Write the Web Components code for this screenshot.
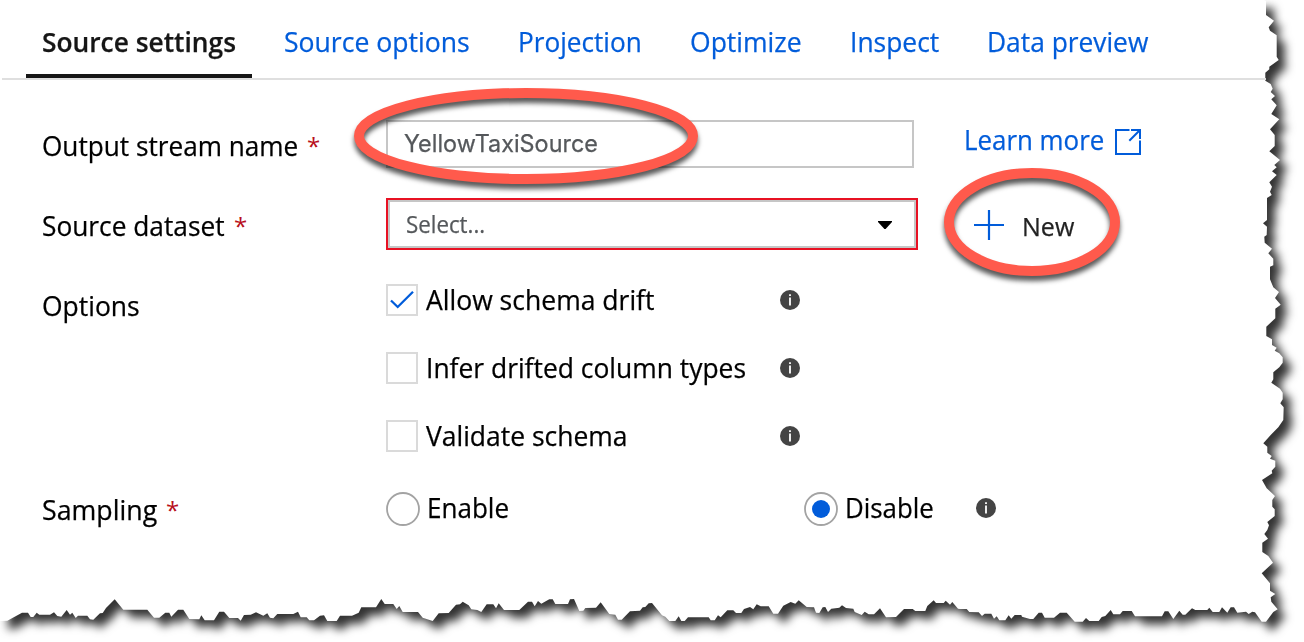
<!DOCTYPE html>
<html lang="en">
<head>
<meta charset="utf-8">
<title>Source settings</title>
<style>
body{margin:0;background:#fff;overflow:hidden;font-family:"Open Sans","Noto Sans",sans-serif;font-size:27px;line-height:36px;color:#000}
</style>
</head>
<body>
<source-settings></source-settings>
<script>
const define = (name, html, setup) => customElements.define(name, class extends HTMLElement {
  connectedCallback() {
    if (this.shadowRoot) return;
    this.attachShadow({mode: 'open'}).innerHTML = html;
    if (setup) setup(this, this.shadowRoot);
  }
});

/* Text set to a fixed advance width by horizontal condensing. */
define('fit-text', `<style>
:host{display:block;white-space:nowrap;flex:none;-webkit-text-stroke:.25px currentColor}
span{display:inline-block;transform-origin:0 50%}
</style><span><slot></slot></span>`, (el, root) => {
  const span = root.querySelector('span'), w = +el.getAttribute('w');
  el.style.width = w + 'px';
  span.style.transform = `scaleX(${w / span.offsetWidth})`;
});

define('tab-item', `<style>
:host{display:block;box-sizing:border-box;height:78px;padding:24px 16px 0;color:#015cda}
:host([active]){font-weight:600;color:#161616;border-bottom:4px solid #161616}
</style><slot></slot>`);

define('tab-bar', `<style>
:host{display:flex;gap:16px;box-sizing:border-box;height:80px;width:1264px;margin-left:2px;padding-left:24px;border-bottom:2px solid #dfdfdf}
</style><slot></slot>`);

define('form-row', `<style>
:host{display:grid;grid-template-columns:344px 1fr;align-items:start}
.label{display:flex;gap:10px;padding-top:var(--drop,0)}
.star{display:none;color:#b8101c;font-size:24px;margin-left:-1px}
:host([required]) .star{display:block}
.controls{display:flex}
</style><div class="label"><slot name="label"></slot><span class="star">*</span></div><div class="controls"><slot></slot></div>`);

define('text-field', `<style>
:host{display:block;box-sizing:border-box;width:528px;height:48px;border:2px solid #c6c6c6;padding:4px 16px;font-family:Inter,sans-serif;font-size:24px;color:#55585b}
</style><slot></slot>`);

define('select-field', `<style>
:host{display:flex;justify-content:space-between;align-items:center;box-sizing:border-box;width:532px;height:52px;border:2px solid #e81123;box-shadow:inset 0 0 0 2px #c6c6c6;padding:0 24px 0 18px;font-size:24px;color:#55585b}
svg{display:block;margin-top:3px}
</style><slot></slot><svg width="14" height="9" viewBox="0 0 14 9"><path d="M0 0H14V1L7.6 8H6.4L0 1Z" fill="#000"/></svg>`);

define('info-dot', `<style>:host{display:block;flex:none}svg{display:block}</style>
<svg width="20" height="20" viewBox="0 0 20 20"><circle cx="10" cy="10" r="10" fill="#444"/><path d="M10 4.2V6M10 7.6V15.6" stroke="#fff" stroke-width="1.8"/></svg>`);

define('check-option', `<style>
:host{display:grid;grid-template-columns:32px 354px 20px;grid-template-rows:32px;align-items:center;height:32px}
.box{box-sizing:border-box;width:32px;height:32px;border:2px solid #dadada}
.text{padding-left:8px}
path{display:none}
:host([checked]) path{display:block}
svg{display:block}
info-dot{margin-left:8px}
</style><div class="box"><svg width="28" height="28" viewBox="0 0 28 28"><path d="M3 14.5L9.7 21L25 5.7" fill="none" stroke="#015cda" stroke-width="2.3"/></svg></div>
<div class="text"><slot></slot></div><info-dot></info-dot>`);

define('check-list', `<style>:host{display:flex;flex-direction:column;gap:36px}</style><slot></slot>`);

define('radio-option', `<style>
:host{display:flex;gap:7px;height:34px}
svg{display:block}
circle+circle{display:none}
:host([checked]) circle+circle{display:block}
div{margin-top:-2px}
</style><svg width="34" height="34" viewBox="0 0 34 34"><circle cx="17" cy="17" r="16" fill="#fff" stroke="#a3a3a3" stroke-width="1.8"/><circle cx="17" cy="17" r="9" fill="#015cda"/></svg><div><slot></slot></div>`);

define('learn-link', `<style>
:host{display:flex;gap:11px;color:#015cda;margin:2px 0 0 50px;height:36px}
svg{display:block;margin-top:7px}
</style><slot></slot><svg width="26" height="26" viewBox="0 0 26 26" fill="none" stroke="#015cda" stroke-width="2"><path d="M14.5 1H1V25H25V11.5M16 1H25V10M25 1L14.3 11.7"/></svg>`);

define('new-button', `<style>
:host{display:flex;gap:18px;margin:10px 0 0 56px;font-size:26px;color:#222}
svg{display:block;margin-top:1px}
</style><svg width="30" height="32" viewBox="0 0 30 32"><path d="M0 16H30M15 1V31" stroke="#015cda" stroke-width="2.2"/></svg><slot></slot>`);

/* Hand-drawn highlight rings laid over the form. */
define('ring-marks', `<style>:host{position:absolute;left:0;top:0;pointer-events:none}svg{display:block;overflow:visible;filter:drop-shadow(0 5px 2.5px rgba(0,0,0,.65))}</style>
<svg width="1304" height="642" fill="none" stroke="#ff5a4c" stroke-width="10"><ellipse cx="526" cy="136" rx="167" ry="43"/><ellipse cx="1032" cy="222" rx="83" ry="49"/></svg>`);

/* Torn sheet: each segment has an origin and outline points in thirds of a pixel. */
const SEGMENTS = [
 [1220,0,'138 3 138 45 162 62 146 82 150 92 170 106 170 170 176 180 148 200 148 208 136 218 136 242 152 252 158 266 152 276 165 288 154 298 170 316 154 342 178 358 150 388 164 405 164 438 148 454 180 480 163 495 170 502 156 514 170 525 148 547 156 560 150 575 155 585 141 594'],
 [1220,210,'141 30 129 40 141 50 140 75 133 80 134 98 156 116 145 130 160 146 160 166 150 170 150 208 160 232 177 246 165 264 182 284 166 296 166 325 139 350 139 378 156 388 156 405 170 413 164 422 178 430 188 442 188 458 178 472 160 487 160 508 154 518 180 536 188 548 188 568 181 580 191 592'],
 [1220,420,'190 0 175 22 152 45 130 70 142 80 142 98 155 108 150 116 166 122 166 140 155 152 157 160 126 180 140 205 165 228 157 240 157 260 164 268 164 288 142 306 147 316 142 330 133 342 144 356 127 368 127 396 145 408 159 428 125 460 150 490 150 512 166 522 152 532 154 545 173 568 160 576 138 605'],
 [960,580,'905 125 885 97 877 95 866 102 858 95 832 98 822 82 812 82 802 98 786 82 778 96 758 96 748 83 742 90 706 90 696 85 676 104 668 104 658 92 640 117 625 94 614 94 606 109 525 109 515 93 488 93 480 103 460 103 452 90 436 108 425 111 416 123 388 123 378 114 368 125 344 125 320 98 300 98 282 113 254 113 246 98 236 98 220 117 210 117 186 110 184 105 164 105 154 116 146 106 136 121 118 121 110 109 102 116 94 101 74 101 66 108 56 97 28 96 20 87 0 87'],
 [640,580,'954 86 937 66 930 74 917 62 911 69 888 69 881 61 862 78 856 93 826 93 818 87 792 87 768 111 738 112 720 85 702 103 686 103 674 95 665 105 644 96 640 86 618 84 606 76 598 83 574 86 564 96 556 81 548 82 538 99 528 98 522 82 500 81 476 61 466 71 452 66 430 77 414 101 400 101 386 79 362 79 350 73 340 88 330 81 312 87 304 99 288 99 280 91 262 91 242 112 234 106 224 121 212 121 206 112 144 112 134 123 124 123 116 109 106 123 88 123 76 110 66 106 36 69 26 70 16 81 8 82 0 92'],
 [320,580,'930 94 905 119 894 119 886 104 868 102 842 67 828 83 796 84 790 92 778 93 762 57 750 58 744 72 706 72 698 58 688 58 664 71 654 63 644 79 636 65 624 65 598 90 552 90 536 70 528 85 520 73 500 73 484 96 472 90 454 88 446 76 428 65 420 73 408 74 386 99 356 100 338 123 308 113 294 96 248 96 238 78 230 87 220 72 194 72 184 57 168 82 124 82 116 98 96 107 60 107 50 123 22 123 12 106 0 107'],
 [0,580,'942 121 928 121 920 112 902 112 894 95 880 102 832 102 820 115 810 113 802 100 790 107 768 97 752 104 732 105 722 122 714 114 688 114 672 95 658 95 642 121 614 121 604 106 598 118 568 117 550 89 534 89 514 110 508 98 496 98 478 113 462 113 442 89 370 89 344 58 318 84 308 99 300 100 280 119 270 118 262 107 234 107 227 114 217 98 210 104 200 90 184 110 172 108 162 97 150 104 118 104 110 98 100 111 92 111 84 98 66 98 44 110 22 122 0 123']
];
define('torn-sheet', `<style>:host{position:absolute;left:0;top:0;z-index:-1}svg{display:block;filter:drop-shadow(8px 8px 5px rgba(0,0,0,.8))}</style>
<svg width="1304" height="642"><polygon fill="#fff"/></svg>`, (el, root) => {
  const pts = ['0,0', '1264,0'];
  for (const [ox, oy, s] of SEGMENTS) {
    const n = s.split(' ').map(Number);
    for (let i = 0; i < n.length; i += 2) pts.push((ox + n[i] / 3).toFixed(1) + ',' + (oy + n[i + 1] / 3).toFixed(1));
  }
  root.querySelector('polygon').setAttribute('points', pts.join(' '));
});

define('source-settings', `<style>
:host{display:block;position:relative;z-index:0;width:1304px;height:642px;overflow:hidden}
.form{padding:40px 0 0 42px;display:flex;flex-direction:column}
.r1{--drop:8px;height:78px}
.r2{--drop:10px;height:86px}
.r3{--drop:4px;height:208px}
.r4{height:34px}
.second{margin-left:295px}
.r4 info-dot{margin:6px 0 0 42px}
</style>
<torn-sheet></torn-sheet>
<tab-bar>
<tab-item active><fit-text w="194">Source settings</fit-text></tab-item>
<tab-item><fit-text w="186">Source options</fit-text></tab-item>
<tab-item><fit-text w="124">Projection</fit-text></tab-item>
<tab-item><fit-text w="112">Optimize</fit-text></tab-item>
<tab-item><fit-text w="89">Inspect</fit-text></tab-item>
<tab-item><fit-text w="161">Data preview</fit-text></tab-item>
</tab-bar>
<div class="form">
<form-row class="r1" required><fit-text slot="label" w="256">Output stream name</fit-text>
<text-field><fit-text w="194">YellowTaxiSource</fit-text></text-field>
<learn-link><fit-text w="140">Learn more</fit-text></learn-link></form-row>
<form-row class="r2" required><fit-text slot="label" w="183">Source dataset</fit-text>
<select-field><fit-text w="79">Select...</fit-text></select-field>
<new-button><fit-text w="52">New</fit-text></new-button></form-row>
<form-row class="r3"><fit-text slot="label" w="98">Options</fit-text>
<check-list>
<check-option checked><fit-text w="229">Allow schema drift</fit-text></check-option>
<check-option><fit-text w="320">Infer drifted column types</fit-text></check-option>
<check-option><fit-text w="202">Validate schema</fit-text></check-option>
</check-list></form-row>
<form-row class="r4" required><fit-text slot="label" w="115">Sampling</fit-text>
<radio-option><fit-text w="82">Enable</fit-text></radio-option>
<radio-option class="second" checked><fit-text w="89">Disable</fit-text></radio-option>
<info-dot></info-dot></form-row>
</div>
<ring-marks></ring-marks>`);
</script>
</body>
</html>
